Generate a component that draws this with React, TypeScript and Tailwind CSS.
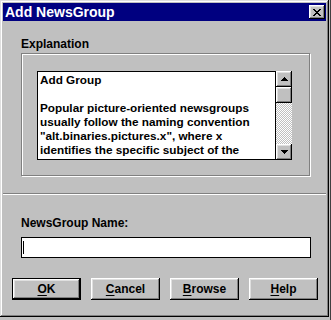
const font = { fontFamily: '"Liberation Sans", Arial, sans-serif' };

const raised =
  "shadow-[inset_-1px_-1px_#000,inset_1px_1px_#fff,inset_-2px_-2px_#808080,inset_2px_2px_#dfdfdf]";

function CloseGlyph() {
  const rows = ["11000011", "01100110", "00111100", "00011000", "00111100", "01100110", "11000011"];
  return (
    <svg width="8" height="7" viewBox="0 0 8 7" shapeRendering="crispEdges">
      {rows.flatMap((r, y) =>
        r.split("").map((c, x) => (c === "1" ? <rect key={`${x}-${y}`} x={x} y={y} width="1" height="1" fill="#000" /> : null))
      )}
    </svg>
  );
}

function Arrow({ down }: { down?: boolean }) {
  return (
    <svg width="7" height="4" viewBox="0 0 7 4" shapeRendering="crispEdges">
      <path d={down ? "M0 0h7v1h-1v1h-1v1h-1v1h-1v-1h-1v-1h-1v-1h-1z" : "M3 0h1v1h1v1h1v1h1v1h-7v-1h1v-1h1v-1h1z"} fill="#000" />
    </svg>
  );
}

function Btn({ label, def }: { label: string; def?: boolean }) {
  const inner = (
    <div className={`flex h-full w-full items-center justify-center bg-[#c0c0c0] text-[12px] font-bold text-black ${raised}`}>
      <span>
        <u className="underline-offset-2">{label[0]}</u>
        {label.slice(1)}
      </span>
    </div>
  );
  return def ? (
    <div className="h-[22px] w-[69px] border border-black">{inner}</div>
  ) : (
    <div className="h-[22px] w-[69px]">{inner}</div>
  );
}

export default function App() {
  const lines = [
    "Add Group",
    "\u00a0",
    "Popular picture-oriented newsgroups",
    "usually follow the naming convention",
    "\"alt.binaries.pictures.x\", where x",
    "identifies the specific subject of the",
  ];
  return (
    <div className="flex h-[320px] w-[331px] bg-[#c0c0c0]" style={font}>
      <div className="flex h-[317px] w-[329px] flex-col bg-[#c0c0c0] p-[3px] shadow-[inset_-1px_-1px_#000,inset_1px_1px_#dfdfdf,inset_-2px_-2px_#808080,inset_2px_2px_#fff]">
        <div className="flex h-[18px] items-center justify-between bg-[#000080] pl-[2px] pr-[1px]">
          <span className="text-[14px] font-bold leading-none text-white">Add NewsGroup</span>
          <div className={`flex h-[14px] w-[16px] items-center justify-center bg-[#c0c0c0] ${raised}`}>
            <CloseGlyph />
          </div>
        </div>

        <div className="pl-[18px]">
          <div className="mt-[17px] text-[12px] font-bold leading-[13px] text-black">Explanation</div>
          <div className="mt-[2px] h-[123px] w-[289px] border border-[#808080] pl-[15px] pt-[17px] shadow-[1px_1px_0_#fff,inset_1px_1px_0_#fff]">
            <div className="flex h-[89px] w-[255px]">
              <div className="h-full w-[239px] overflow-hidden border border-black bg-white px-[2px] pt-[1px] text-[11.75px] font-bold leading-[14px] text-black">
                {lines.map((l, i) => (
                  <div key={i} className="whitespace-pre">
                    {l}
                  </div>
                ))}
              </div>
              <div className="flex h-full w-[16px] flex-col">
                <div className={`flex h-[16px] items-center justify-center bg-[#c0c0c0] ${raised}`}>
                  <Arrow />
                </div>
                <div className={`h-[16px] bg-[#c0c0c0] ${raised}`} />
                <div className="flex-1 bg-[repeating-conic-gradient(#fff_0%_25%,#c0c0c0_0%_50%)] bg-[length:2px_2px]" />
                <div className={`flex h-[16px] items-center justify-center bg-[#c0c0c0] ${raised}`}>
                  <Arrow down />
                </div>
              </div>
            </div>
          </div>
        </div>

        <div className="mt-[17px] h-[2px] border-t border-[#808080] border-b border-b-white" />

        <div className="pl-[18px]">
          <div className="mt-[22px] text-[12px] font-bold leading-[13px] text-black">NewsGroup Name:</div>
          <div className="mt-[7px] flex h-[21px] w-[290px] items-center border border-black bg-white pl-[1px]">
            <div className="h-[13px] w-[1px] bg-black" />
          </div>
        </div>

        <div className="mt-[20px] flex gap-[10px] pl-[9px]">
          <Btn label="OK" def />
          <Btn label="Cancel" />
          <Btn label="Browse" />
          <Btn label="Help" />
        </div>
      </div>
      <div className="ml-[1px] h-full w-[1px] bg-[#404040]" />
    </div>
  );
}
